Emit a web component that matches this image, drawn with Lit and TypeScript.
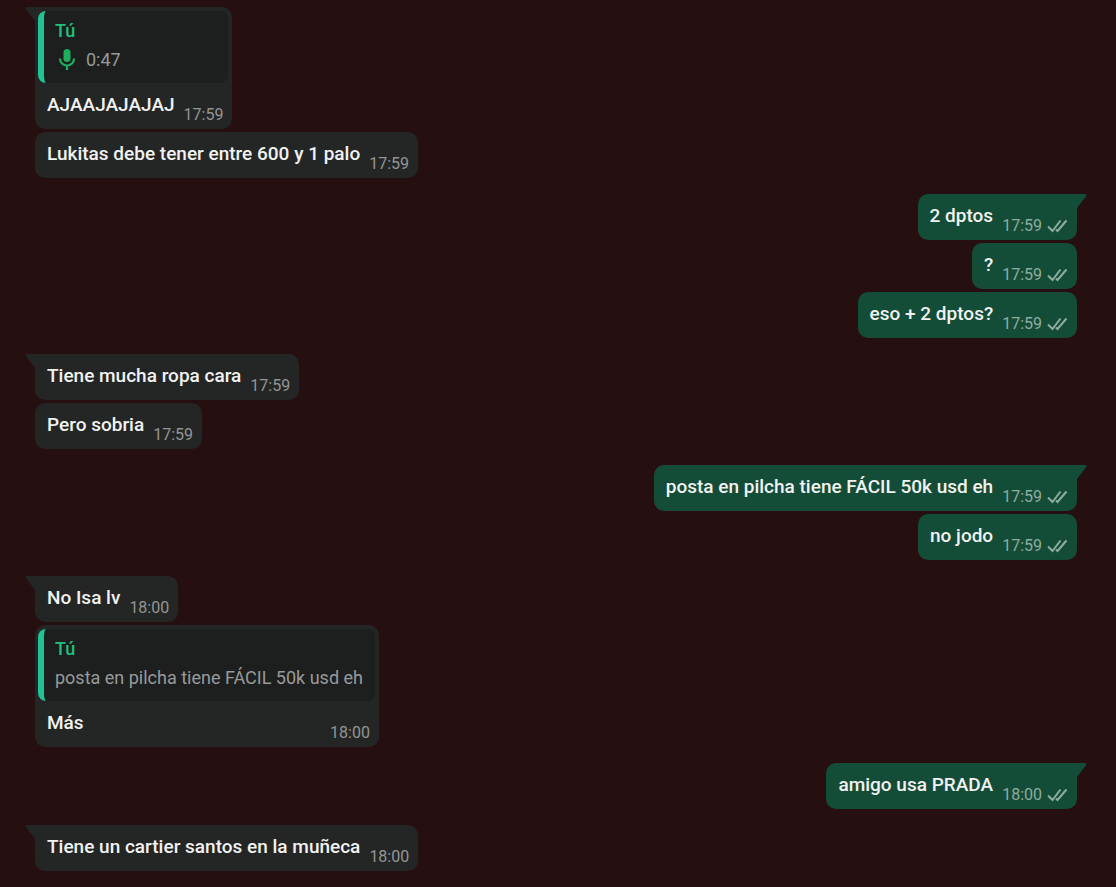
import { LitElement, html, css } from "lit";
import { customElement, property } from "lit/decorators.js";

interface Quote {
  author: string;
  text: string;
  voice?: boolean;
}

interface Message {
  text: string;
  time: string;
  quote?: Quote;
}

interface Group {
  mine: boolean;
  messages: Message[];
}

const conversation: Group[] = [
  {
    mine: false,
    messages: [
      { text: "AJAAJAJAJAJ", time: "17:59", quote: { author: "Tú", text: "0:47", voice: true } },
      { text: "Lukitas debe tener entre 600 y 1 palo", time: "17:59" },
    ],
  },
  {
    mine: true,
    messages: [
      { text: "2 dptos", time: "17:59" },
      { text: "?", time: "17:59" },
      { text: "eso + 2 dptos?", time: "17:59" },
    ],
  },
  {
    mine: false,
    messages: [
      { text: "Tiene mucha ropa cara", time: "17:59" },
      { text: "Pero sobria", time: "17:59" },
    ],
  },
  {
    mine: true,
    messages: [
      { text: "posta en pilcha tiene FÁCIL 50k usd eh", time: "17:59" },
      { text: "no jodo", time: "17:59" },
    ],
  },
  {
    mine: false,
    messages: [
      { text: "No Isa lv", time: "18:00" },
      {
        text: "Más",
        time: "18:00",
        quote: { author: "Tú", text: "posta en pilcha tiene FÁCIL 50k usd eh" },
      },
    ],
  },
  { mine: true, messages: [{ text: "amigo usa PRADA", time: "18:00" }] },
  { mine: false, messages: [{ text: "Tiene un cartier santos en la muñeca", time: "18:00" }] },
];

@customElement("chat-bubble")
export class ChatBubble extends LitElement {
  @property({ attribute: false }) message!: Message;
  @property({ type: Boolean, reflect: true }) mine = false;
  @property({ type: Boolean, reflect: true }) tail = false;

  static styles = css`
    :host {
      display: block;
      position: relative;
      max-width: 75%;
      border-radius: 10px;
      background: #242626;
      color: #f1f2f1;
    }
    :host([mine]) {
      background: #144d37;
    }
    :host([tail]) {
      border-top-left-radius: 0;
    }
    :host([mine][tail]) {
      border-top-left-radius: 10px;
      border-top-right-radius: 0;
    }
    .tail {
      position: absolute;
      top: 0;
      right: 100%;
      width: 10px;
      height: 14px;
      fill: #242626;
    }
    :host([mine]) .tail {
      right: auto;
      left: 100%;
      fill: #144d37;
      transform: scaleX(-1);
    }
    .quote {
      margin: 4px 4px 0 3px;
      padding: 5px 12px 9px 11px;
      border-left: 6px solid #21c293;
      border-radius: 8px;
      background: #1d1f1f;
      font-size: 18px;
      line-height: 29px;
      color: #989a99;
    }
    .author {
      font-weight: 500;
      color: #21c07c;
    }
    .excerpt {
      display: flex;
      align-items: center;
      gap: 7px;
    }
    .mic {
      width: 24px;
      height: 24px;
      color: #1fae5b;
    }
    .row {
      display: flex;
      justify-content: space-between;
      align-items: flex-end;
      gap: 9px;
      padding: 8px 9px 4px 12px;
    }
    .text {
      padding-bottom: 6px;
      font-size: 19px;
      font-weight: 500;
      line-height: 28px;
    }
    .meta {
      display: flex;
      align-items: center;
      gap: 5px;
      font-size: 16px;
      line-height: 20px;
      color: #939594;
    }
    :host([mine]) .meta {
      color: #8eac9f;
    }
    .ticks {
      width: 21px;
      height: 14px;
    }
  `;

  private renderQuote(quote: Quote) {
    return html`<div class="quote">
      <div class="author">${quote.author}</div>
      <div class="excerpt">
        ${quote.voice
          ? html`<svg class="mic" viewBox="0 0 24 24" aria-hidden="true">
              <rect x="8.5" y="1" width="7" height="13" rx="3.5" fill="currentColor" />
              <path d="M5 10.5a7 7 0 0 0 14 0M12 17.5v4.5" fill="none" stroke="currentColor" stroke-width="2.2" />
            </svg>`
          : null}
        <span>${quote.text}</span>
      </div>
    </div>`;
  }

  render() {
    const { text, time, quote } = this.message;
    return html`
      ${this.tail
        ? html`<svg class="tail" viewBox="0 0 10 14" aria-hidden="true"><path d="M1.5 0H10V14L0.8 2Q0 0 1.5 0Z" /></svg>`
        : null}
      ${quote ? this.renderQuote(quote) : null}
      <div class="row">
        <span class="text">${text}</span>
        <span class="meta">
          <time>${time}</time>
          ${this.mine
            ? html`<svg class="ticks" viewBox="0 0 21 14" aria-hidden="true">
                <path d="M1 7.5L5.5 12L13.5 1.5M9 10.5L10.5 12L19.5 1.5" fill="none" stroke="currentColor" stroke-width="2" />
              </svg>`
            : null}
        </span>
      </div>
    `;
  }
}

@customElement("app-root")
export class AppRoot extends LitElement {
  static styles = css`
    :host {
      display: block;
      box-sizing: border-box;
      min-height: 100vh;
      padding: 7px 39px 16px 35px;
      background: #250f11;
      font-family: Roboto, "Liberation Sans", sans-serif;
    }
    .chat {
      display: flex;
      flex-direction: column;
      gap: 16px;
    }
    .group {
      display: flex;
      flex-direction: column;
      align-items: flex-start;
      gap: 3px;
    }
    .group.mine {
      align-items: flex-end;
    }
  `;

  render() {
    return html`<main class="chat">
      ${conversation.map(
        (group) => html`<section class="group ${group.mine ? "mine" : ""}">
          ${group.messages.map(
            (message, i) => html`<chat-bubble .message=${message} ?mine=${group.mine} ?tail=${i === 0}></chat-bubble>`,
          )}
        </section>`,
      )}
    </main>`;
  }
}
